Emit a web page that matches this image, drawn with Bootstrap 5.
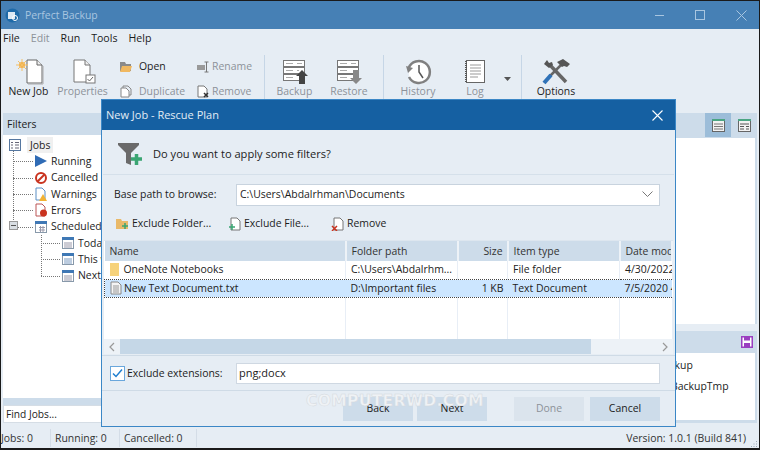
<!doctype html>
<html lang="en"><head><meta charset="utf-8"><title>Perfect Backup</title>
<link href="https://cdn.jsdelivr.net/npm/bootstrap@5.3.0/dist/css/bootstrap.min.css" rel="stylesheet">
<style>
html,body{margin:0;height:450px;overflow:hidden}
body{background:#e6edf4;font-family:"Open Sans","Noto Sans",sans-serif;font-size:10.45px;color:#1c1c1c;line-height:1.2}
svg{display:block;flex:none}
.app-win{width:760px;height:450px;border:1px solid #1a1a1a;border-bottom-width:2px;position:relative;background:#e6edf4;overflow:hidden}
.win-title{height:28px;background:#4680b5;color:#a9c6e0;font-size:10.4px;padding-left:4px}
.menu-row{height:20px;padding:0 0 2px 2px;font-size:10.6px;gap:11px}
.mute{color:#8d9299}
.tool-row{height:64px}
.big-tool{flex:none;height:58px;padding-top:8px}
.small-col{flex:none;gap:8px;padding-top:9px}
.small-tool{gap:3px;height:17px}
.tool-sep{width:1px;height:50px;background:#c6d6e6;flex:none;margin-top:6px}
.main-area{height:316px}
.left-pane{width:112px;margin-left:2px;flex:none}
.pane-head{height:22px;background:#cddcea;padding-left:4px}
.tree-box{height:263px;background:#fff;padding:2px 0 0 5px;position:relative}
.tree-line{height:16.3px;gap:3px;white-space:nowrap;position:relative}
.tree-line.lv1{padding-left:26px}
.tree-line.lv2{padding-left:53px}
.tree-line.lv1::before,.tree-line.lv2::before{content:"";position:absolute;top:50%;border-top:1px dotted #777}
.tree-line.lv1::before{left:5px;width:20px}
.tree-line.lv2::before{left:33px;width:19px}
.dot-v{position:absolute;border-left:1px dotted #777;width:0}
.tree-minus{position:absolute;left:1px;top:0;width:9px;height:9px;background:#d9dee3;border:1px solid #999;z-index:1;margin-top:3px}
.tree-minus::after{content:"";position:absolute;left:1px;right:1px;top:3px;border-top:1px solid #555}
.pill-jobs{background:#f0f0f0;padding:2px 3px;margin-left:2px}
.find-band{height:7px;background:#cddcea}
.find-box{height:18px;background:#fff;border:1px solid #d5dde5;padding-left:2px;font-size:10.2px}
.right-pane{margin-left:auto;width:120px;margin-right:2px;flex:none}
.right-head{height:25px;background:#cddcea}
.view-btn{width:26px;height:24px}
.view-btn.on{background:#9cbdd9}
.right-white{height:186px;background:#fff;border-right:2px solid #cddcea;margin-bottom:7px}
.right-head2{height:22px;background:#cddcea;padding-right:4px}
.right-list{height:70px;background:#fff;padding:2px 0 0 0;line-height:21px;overflow:hidden;border-right:2px solid #cddcea;border-bottom:3px solid #cddcea;white-space:nowrap}
.path-a{margin-left:20px}
.path-b{margin-left:34px}
.status-row{height:18px;position:absolute;left:0;right:0;bottom:1px;color:#333}
.stat-cell{height:100%;border-right:1px solid #d4dde7}
.grip{position:absolute;right:1px;bottom:0}
.job-dialog{position:absolute;left:100px;top:98px;width:575px;height:328px;background:#e6edf4;border:1px solid #3b87c6}
.dlg-title{height:30px;background:#1560a2;color:#e2ecf5;font-size:11px;padding:0 12px 0 4px}
.dlg-intro{height:45px;margin:0 1px;padding:3px 0 0 15px;gap:11px;font-size:11.1px;border-bottom:1px solid #d5e0ea}
.path-row{height:35px;padding:4px 15px 0 12px}
.path-label{width:122px;flex:none}
.path-box{height:22px;flex:1;background:#fff;border:1px solid #c8d3de;padding:0 3px}
.act-row{height:30px;padding:0 0 3px 14px;gap:4px}
.act-item{gap:3px}
.file-wrap{margin:0 2px;height:99px;background:#fff;overflow:hidden;border-top:1px solid #dde6ef}
.file-table{width:569px;table-layout:fixed;margin:0;font-size:10.45px;border-collapse:collapse}
.file-table th,.file-table td{padding:0 0 0 5px;border:0;border-right:1px solid #e8eef6;white-space:nowrap;overflow:hidden;font-weight:400;color:#222;background:transparent;box-shadow:none;vertical-align:middle}
.file-table th{background:#cddcea;height:20px;border-right:2px solid #edf2f7;color:#333}
.file-table td{height:18px}
.file-table tr.sel td{background:#cce6ff;border-top:1px dotted #444;border-bottom:1px dotted #444;border-right:0}
.file-table tr.sel td:first-child{border-left:1px dotted #444}
.file-table td.fill{height:44px}
.h-bar{height:15px;margin:0 2px;background:#edf2f7}
.h-btn{width:16px;height:15px}
.h-thumb{width:471px;background:#c5d7e7;height:100%}
.chk-row{height:36px;border-top:1px solid #cfdbe6;border-bottom:1px solid #cfdbe6;margin-top:1px;padding:0 15px 0 8px}
.chk-mark{width:15px;height:15px;border:1.500px solid #6aa7dc;background:#fff;margin-right:2px}
.ext-box{height:21px;flex:1;background:#fff;border:1px solid #cfd8e2;padding:0 2px;margin-left:12px;font-size:11px}
.dlg-foot{height:36px;padding:6px 15px 0 0}
.dlg-btn{width:70px;height:24px;background:#cddcea;color:#222;border:0;border-radius:0;font-size:10.45px;padding:0}
.dlg-btn.off{background:#dbe4ed;color:#8d9299}
.wmark{position:absolute;left:204px;top:292px;font-size:15.500px;letter-spacing:.35px;color:#eff2f5;-webkit-text-stroke:.5px #d4d9de;font-family:"DejaVu Sans",sans-serif;font-weight:700;pointer-events:none}
</style></head><body>
<div class="app-win">
 <div class="win-title d-flex align-items-center">
  <svg width="15" height="15" viewBox="0 0 15 15"><circle cx="7.5" cy="7.5" r="7" fill="#1e6aa8"/><rect x="3" y="4" width="7" height="7" fill="#dce9f4"/><circle cx="10" cy="10" r="2.5" fill="none" stroke="#fff"/></svg>
  <span style="margin-left:5px">Perfect Backup</span>
  <div class="ms-auto d-flex align-items-center" style="gap:30px;padding-right:12px">
   <svg width="11" height="11" viewBox="0 0 11 11"><path d="M1 5.5h9" stroke="#a9c6e0"/></svg>
   <svg width="11" height="11" viewBox="0 0 11 11"><rect x=".5" y=".5" width="9" height="9" fill="none" stroke="#a9c6e0"/></svg>
   <svg width="11" height="11" viewBox="0 0 11 11"><path d="M.5.5l10 10M10.500.5l-10 10" stroke="#a9c6e0"/></svg>
  </div>
 </div>
 <div class="menu-row d-flex align-items-center"><span>File</span><span class="mute">Edit</span><span>Run</span><span>Tools</span><span>Help</span></div>
 <div class="tool-row d-flex">
  <div class="big-tool d-flex flex-column align-items-center" style="width:55px">
   <svg width="30" height="28" viewBox="0 0 30 28"><path d="M13 3h10l5 5v18H13z" fill="#fff" stroke="#666"/><path d="M23 3v5h5" fill="#eee" stroke="#666"/><path d="M14 27h15V9" fill="none" stroke="#aaa"/><circle cx="8" cy="8" r="3" fill="#f3a83a"/><path d="M8 2v12M2 8h12M4 4l8 8M12 4l-8 8" stroke="#f3c066"/></svg>
   <span>New Job</span></div>
  <div class="big-tool d-flex flex-column align-items-center mute" style="width:53px">
   <svg width="30" height="28" viewBox="0 0 30 28"><path d="M6 3h11l5 5v17H6z" fill="#fff" stroke="#777"/><path d="M17 3v5h5" fill="#eee" stroke="#777"/><rect x="18" y="18" width="9" height="8" fill="#fff" stroke="#777"/><path d="M19.500 22l2 2 3.500-4" fill="none" stroke="#666"/></svg>
   <span>Properties</span></div>
  <div class="small-col d-flex flex-column" style="width:88px;padding-left:11px">
   <div class="small-tool d-flex align-items-center"><svg width="12" height="10" viewBox="0 0 12 10"><path d="M0 0h5l1 2h5v7H0z" fill="#8a8a8a"/><path d="M0 10l2-6h10l-2 6z" fill="#f0b860"/></svg><span class="ms-1">Open</span></div>
   <div class="small-tool d-flex align-items-center mute"><svg width="12" height="13" viewBox="0 0 12 13"><path d="M1 3h5l3 3v6H1z" fill="#fff" stroke="#888"/><path d="M3 3V1h5l3 3v6H9" fill="none" stroke="#888"/></svg><span class="ms-1">Duplicate</span></div>
  </div>
  <div class="small-col d-flex flex-column mute" style="width:67px">
   <div class="small-tool d-flex align-items-center"><svg width="12" height="12" viewBox="0 0 12 12"><rect x="0" y="4" width="8" height="5" fill="#999"/><path d="M9.500 1v10M7.500 1h4M7.500 11h4" stroke="#777" fill="none"/></svg><span>Rename</span></div>
   <div class="small-tool d-flex align-items-center"><svg width="12" height="13" viewBox="0 0 12 13"><path d="M1 1h6l3 3v8H1z" fill="#fff" stroke="#777"/><path d="M7 8l4 4M11 8l-4 4" stroke="#333" stroke-width="1.500"/></svg><span>Remove</span></div>
  </div>
  <div class="tool-sep"></div>
  <div class="big-tool d-flex flex-column align-items-center mute" style="width:59px">
   <svg width="30" height="28" viewBox="0 0 30 28"><g fill="#fff" stroke="#777"><rect x="3.500" y="3.500" width="21" height="6"/><rect x="3.500" y="10.500" width="21" height="6"/><rect x="3.500" y="17.500" width="21" height="6"/></g><path d="M6 6.500h7M6 13.500h7M6 20.500h7M17 6.500h5M17 13.500h2" stroke="#aaa"/><path d="M22 13l6 6h-3v8h-6v-8h-3z" fill="#444"/></svg><span>Backup</span></div>
  <div class="big-tool d-flex flex-column align-items-center mute" style="width:50px">
   <svg width="30" height="28" viewBox="0 0 30 28"><g fill="#fff" stroke="#777"><rect x="3.500" y="3.500" width="21" height="6"/><rect x="3.500" y="10.500" width="21" height="6"/><rect x="3.500" y="17.500" width="21" height="6"/></g><path d="M6 6.500h7M6 13.500h7M6 20.500h7M17 6.500h5" stroke="#aaa"/><path d="M19 13h6v8h3l-6 6-6-6h3z" fill="#888"/></svg><span>Restore</span></div>
  <div style="width:9px"></div><div class="tool-sep"></div>
  <div class="big-tool d-flex flex-column align-items-center mute" style="width:68px">
   <svg width="30" height="28" viewBox="0 0 30 28"><path d="M5.600 11A11 11 0 1 1 6 20" fill="#fff" stroke="#808080" stroke-width="2.500"/><path d="M3 9l7 2-5 5z" fill="#808080"/><path d="M16 8v7l4 6" fill="none" stroke="#555" stroke-width="1.500"/></svg><span>History</span></div>
  <div class="big-tool d-flex flex-column align-items-center mute" style="width:46px">
   <svg width="30" height="28" viewBox="0 0 30 28"><rect x="6.500" y="3.500" width="18" height="22" fill="#fff" stroke="#666"/><path d="M10 8h11M10 11h11M10 14h11M10 17h11M10 20h8" stroke="#999"/><path d="M6 4v21" stroke="#555" stroke-width="2" stroke-dasharray="1 1"/></svg><span>Log</span></div>
  <div class="d-flex" style="width:23px;padding:28px 0 0 6px"><svg width="7" height="4" viewBox="0 0 7 4"><path d="M0 0h7L3.500 4z" fill="#555"/></svg></div>
  <div class="tool-sep"></div>
  <div class="big-tool d-flex flex-column align-items-center" style="width:68px">
   <svg width="30" height="28" viewBox="0 0 30 28"><path d="M8 7l17 18" stroke="#666" stroke-width="3.500"/><path d="M3 7l3-4 2 3 3-1 1 3-4 3z" fill="#555"/><path d="M22 6L9 19" stroke="#666" stroke-width="2.500"/><path d="M3 26l7-8" stroke="#2f72b8" stroke-width="4"/><path d="M16 5l6-3 7 5-3 3-3-1-2 1z" fill="#555"/></svg><span>Options</span></div>
 </div>
 <div class="main-area d-flex">
  <div class="left-pane">
   <div class="pane-head d-flex align-items-center">Filters</div>
   <div class="tree-box">
    <div class="dot-v" style="left:10px;top:15px;height:76px"></div>
    <div class="dot-v" style="left:38px;top:100px;height:41px"></div>
    <div class="tree-line d-flex align-items-center"><svg width="14" height="14" viewBox="0 0 14 14"><rect x="1.500" y="1.500" width="11" height="11" fill="#fff" stroke="#5577a0"/><path d="M3 4.500h2M3 7h2M3 10h2M7 4.500h4M7 7h4M7 10h4" stroke="#667"/></svg><span class="pill-jobs">Jobs</span></div>
    <div class="tree-line lv1 d-flex align-items-center"><svg width="14" height="14" viewBox="0 0 14 14"><path d="M1 1l12 6-12 6z" fill="#2f6bb5"/></svg><span>Running</span></div>
    <div class="tree-line lv1 d-flex align-items-center"><svg width="14" height="14" viewBox="0 0 14 14"><circle cx="7" cy="7" r="5" fill="#fff" stroke="#c9331f" stroke-width="2"/><path d="M3.500 10.500l7-7" stroke="#c9331f" stroke-width="2"/></svg><span>Cancelled</span></div>
    <div class="tree-line lv1 d-flex align-items-center"><svg width="14" height="14" viewBox="0 0 14 14"><path d="M2 1h6l3 3v9H2z" fill="#fff" stroke="#5b8fc5"/><path d="M9 7l4 7H5z" fill="#f2b233"/></svg><span>Warnings</span></div>
    <div class="tree-line lv1 d-flex align-items-center"><svg width="14" height="14" viewBox="0 0 14 14"><path d="M2 1h6l3 3v9H2z" fill="#fff" stroke="#b55"/><circle cx="9.500" cy="10" r="3.500" fill="#c9331f"/></svg><span>Errors</span></div>
    <div class="tree-line lv1 d-flex align-items-center"><span class="tree-minus"></span><svg width="14" height="14" viewBox="0 0 14 14"><rect x="1.500" y="2.500" width="11" height="10" fill="#fff" stroke="#8899aa"/><rect x="1" y="1" width="12" height="3" fill="#3f78b5"/><path d="M5 7.500h6M5 10h6M6.500 6v6M9 6v6" stroke="#99a"/></svg><span>Scheduled</span></div>
    <div class="tree-line lv2 d-flex align-items-center"><svg width="14" height="14" viewBox="0 0 14 14"><rect x="1.500" y="2.500" width="11" height="10" fill="#fff" stroke="#8899aa"/><rect x="1" y="1" width="12" height="3" fill="#3f78b5"/><path d="M3 7h8M3 9h8M3 11h8" stroke="#99a"/></svg><span>Today</span></div>
    <div class="tree-line lv2 d-flex align-items-center"><svg width="14" height="14" viewBox="0 0 14 14"><rect x="1.500" y="2.500" width="11" height="10" fill="#fff" stroke="#8899aa"/><rect x="1" y="1" width="12" height="3" fill="#3f78b5"/><path d="M3 7h8M3 9h8M3 11h8" stroke="#7a9ac0"/></svg><span>This week</span></div>
    <div class="tree-line lv2 d-flex align-items-center"><svg width="14" height="14" viewBox="0 0 14 14"><rect x="1.500" y="2.500" width="11" height="10" fill="#fff" stroke="#8899aa"/><rect x="1" y="1" width="12" height="3" fill="#3f78b5"/><path d="M3 7h8M3 9h8M3 11h8" stroke="#99a"/></svg><span>Next week</span></div>
   </div>
   <div class="find-band"></div>
   <div class="find-box d-flex align-items-center">Find Jobs...</div>
  </div>
  <div class="right-pane">
   <div class="right-head d-flex justify-content-end">
    <div class="view-btn on d-flex align-items-center justify-content-center"><svg width="13" height="13" viewBox="0 0 13 13"><rect x=".5" y=".5" width="12" height="12" fill="#f2f2f2" stroke="#666"/><rect x="0" y="0" width="13" height="2" fill="#4aa582"/><path d="M2 5h9M2 7.500h9M2 10h9" stroke="#777"/></svg></div>
    <div class="view-btn d-flex align-items-center justify-content-center"><svg width="13" height="13" viewBox="0 0 13 13"><rect x=".5" y=".5" width="12" height="12" fill="#f2f2f2" stroke="#666"/><rect x="0" y="0" width="13" height="2" fill="#4aa582"/><path d="M2 5h9M2 7.500h4M8 7.500h3M2 10h4M8 10h3" stroke="#555"/></svg></div>
   </div>
   <div class="right-white"></div>
   <div class="right-head2 d-flex align-items-center justify-content-end"><svg width="12" height="12" viewBox="0 0 12 12"><path d="M.75.75h10.500v10.500H.75z" fill="#fff" stroke="#9a3fc0" stroke-width="1.500"/><rect x="3" y="1" width="6" height="3.500" fill="#9a3fc0"/><rect x="3" y="7" width="6" height="4" fill="#9a3fc0"/></svg></div>
   <div class="right-list"><div class="path-a">Backup</div><div class="path-b">BackupTmp</div></div>
  </div>
 </div>
 <div class="status-row d-flex align-items-center"><div class="stat-cell d-flex align-items-center" style="width:50px">Jobs: 0</div><div class="stat-cell d-flex align-items-center ps-1" style="width:69px">Running: 0</div><div class="stat-cell d-flex align-items-center ps-1" style="width:77px">Cancelled: 0</div><span class="ms-auto" style="padding-right:13px">Version: 1.0.1 (Build 841)</span></div>
 <svg class="grip" width="8" height="8" viewBox="0 0 8 8"><path d="M6 1h1v1H6zM3.500 3.500h1v1h-1zM6 3.500h1v1H6zM1 6h1v1H1zM3.500 6h1v1h-1zM6 6h1v1H6z" fill="#9aa8b5"/></svg>

 <div class="job-dialog">
  <div class="dlg-title d-flex align-items-center"><span>New Job - Rescue Plan</span><svg class="ms-auto" width="11" height="11" viewBox="0 0 11 11"><path d="M.5.5l10 10M10.500.5l-10 10" stroke="#fff" stroke-width="1.100"/></svg></div>
  <div class="dlg-intro d-flex align-items-center"><svg width="24" height="22" viewBox="0 0 24 22"><path d="M0 0h21v2l-8 8v12l-5-2V10L0 2z" fill="#6a6a6a"/><path d="M13 16h11M18.500 11v11" stroke="#3aa572" stroke-width="3.500"/></svg><span>Do you want to apply some filters?</span></div>
  <div class="path-row d-flex align-items-center"><span class="path-label">Base path to browse:</span><div class="path-box d-flex align-items-center">C:\Users\Abdalrhman\Documents<svg class="ms-auto" style="margin-right:3px" width="11" height="7" viewBox="0 0 11 7"><path d="M.5.5l5 5 5-5" fill="none" stroke="#777"/></svg></div></div>
  <div class="act-row d-flex align-items-center">
   <div class="act-item d-flex align-items-center" style="width:108px"><svg width="13" height="13" viewBox="0 0 13 13"><path d="M0 2h5l1 2h6v8H0z" fill="#e9b969"/><path d="M9 6v6M6 9h6" stroke="#3aa572" stroke-width="1.500"/></svg>Exclude Folder...</div>
   <div class="act-item d-flex align-items-center" style="width:99px"><svg width="13" height="14" viewBox="0 0 13 14"><path d="M3 1h6l3 3v9H3z" fill="#fff" stroke="#777"/><path d="M4 7v6M1 10h6" stroke="#3aa572" stroke-width="1.500"/></svg>Exclude File...</div>
   <div class="act-item d-flex align-items-center"><svg width="13" height="14" viewBox="0 0 13 14"><path d="M3 1h6l3 3v9H3z" fill="#fff" stroke="#777"/><path d="M1 9l5 5M6 9l-5 5" stroke="#c9331f" stroke-width="1.500"/></svg>Remove</div>
  </div>
  <div class="file-wrap">
   <table class="table file-table">
    <colgroup><col style="width:241px"><col style="width:112px"><col style="width:50px"><col style="width:112px"><col></colgroup>
    <thead><tr><th>Name</th><th>Folder path</th><th class="text-end pe-1">Size</th><th>Item type</th><th>Date mod</th></tr></thead>
    <tbody>
     <tr><td><div class="d-flex align-items-center" style="gap:5px"><svg width="9" height="13" viewBox="0 0 9 13"><path d="M0 0h9v13H0z" fill="#f6d27a"/></svg>OneNote Notebooks</div></td><td>C:\Users\Abdalrhm...</td><td></td><td>File folder</td><td>4/30/2022</td></tr>
     <tr class="sel"><td><div class="d-flex align-items-center" style="gap:2px"><svg width="12" height="14" viewBox="0 0 12 14"><path d="M1 1h7l3 3v9H1z" fill="#f4f4f4" stroke="#888"/><path d="M3 5h6M3 7h6M3 9h6M3 11h6" stroke="#999"/></svg>New Text Document.txt</div></td><td>D:\Important files</td><td class="text-end pe-1">1 KB</td><td>Text Document</td><td>7/5/2020 4</td></tr>
     <tr><td class="fill"></td><td class="fill"></td><td class="fill"></td><td class="fill"></td><td class="fill"></td></tr>
    </tbody>
   </table>
  </div>
  <div class="h-bar d-flex">
   <div class="h-btn d-flex align-items-center justify-content-center"><svg width="6" height="10" viewBox="0 0 6 10"><path d="M5 1L1 5l4 4" fill="none" stroke="#999" stroke-width="1.200"/></svg></div>
   <div class="h-thumb"></div>
   <div class="h-btn ms-auto d-flex align-items-center justify-content-center"><svg width="6" height="10" viewBox="0 0 6 10"><path d="M1 1l4 4-4 4" fill="none" stroke="#999" stroke-width="1.200"/></svg></div>
  </div>
  <div class="chk-row d-flex align-items-center"><div class="chk-mark d-flex align-items-center justify-content-center"><svg width="11" height="9" viewBox="0 0 11 9"><path d="M1 4.500l3 3 6-7" fill="none" stroke="#1f7fd0" stroke-width="1.500"/></svg></div><span style="width:97px">Exclude extensions:</span><div class="ext-box d-flex align-items-center">png;docx</div></div>
  <div class="dlg-foot d-flex justify-content-end"><button class="btn dlg-btn me-1">Back</button><button class="btn dlg-btn">Next</button><button class="btn dlg-btn off" style="margin-left:27px">Done</button><button class="btn dlg-btn" style="margin-left:6px">Cancel</button></div>
  <div class="wmark">COMPUTERWD.COM</div>
 </div>
</div>
<script src="https://cdn.jsdelivr.net/npm/bootstrap@5.3.0/dist/js/bootstrap.bundle.min.js"></script>
</body></html>
